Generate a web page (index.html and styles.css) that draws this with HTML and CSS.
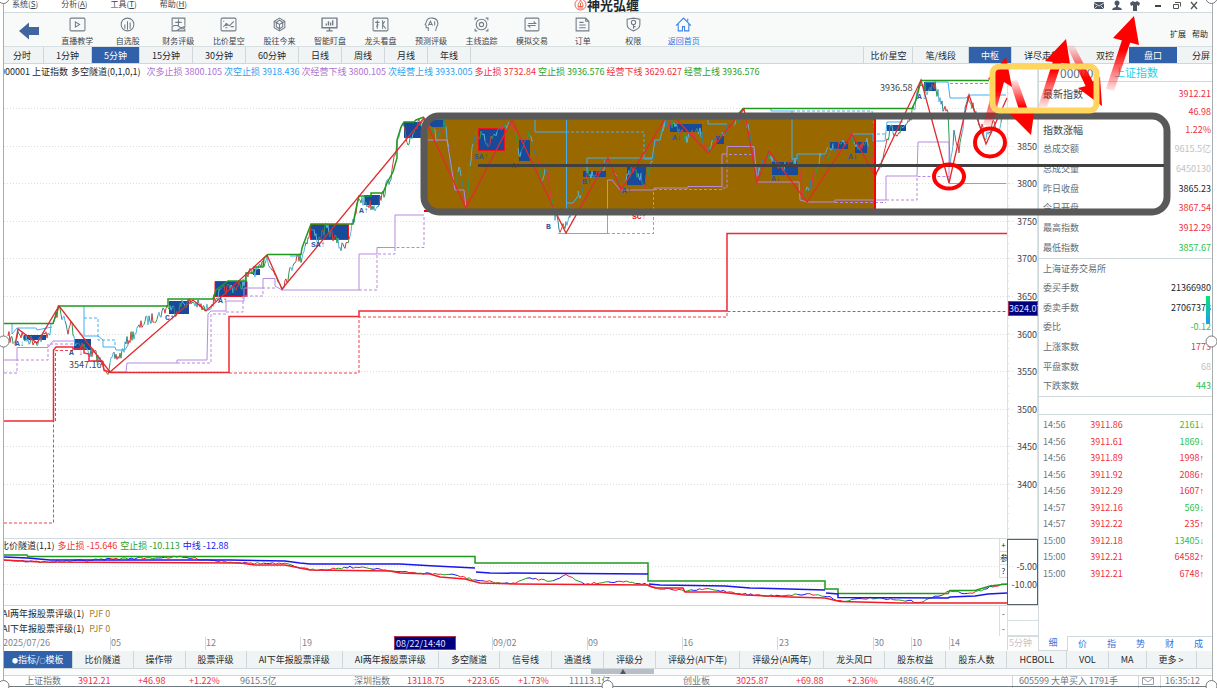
FILE: index.html
```html
<!DOCTYPE html>
<html lang="zh-CN">
<head>
  <meta charset="UTF-8">
  <title>神光弘缠</title>
  <link rel="stylesheet" href="styles.css">
</head>
<body>
  <div class="app">
    <header class="menu-bar">
      <nav class="menus">
        <button>系统(<u>S</u>)</button>
        <button>分析(<u>A</u>)</button>
        <button>工具(<u>T</u>)</button>
        <button>帮助(<u>H</u>)</button>
      </nav>
      <div class="brand">
        <svg width="13" height="13" viewBox="0 0 13 13" fill="none" stroke="#f0604d">
          <circle cx="6.500" cy="6.500" r="5.500"/>
          <path d="M6.500 2C7 4 9.500 5.500 9 8.500H4C3.500 5.500 6 4.500 6.500 2zM6.500 5v4M4 10h5"/>
        </svg>
        <span>神光弘缠</span>
      </div>
      <div class="window-tools">
        <button aria-label="消息"><svg width="12" height="12" viewBox="0 0 12 12"><rect x="1" y="2" width="10" height="7" rx="1" fill="#4d5763"/><path d="M1 3l5 3 5-3M1 9l3-3M11 9L8 6" fill="none" stroke="#cdd2d8"/></svg></button>
        <button aria-label="用户"><svg width="12" height="12" viewBox="0 0 12 12" fill="#4d5763"><circle cx="6" cy="3" r="2.500"/><path d="M5 5h2v2l3 1 1 2H1l1-2 3-1z"/></svg></button>
        <button aria-label="皮肤"><svg width="12" height="12" viewBox="0 0 12 12" fill="#4d5763"><path d="M1 3l3-2q2 2 4 0l3 2-1 3-2-1v6H4V5L2 6z"/></svg></button>
        <button aria-label="最小化" class="gap"><svg width="12" height="12" viewBox="0 0 12 12"><path d="M3 6h6" stroke="#444" stroke-width="2"/></svg></button>
        <button aria-label="还原"><svg width="12" height="12" viewBox="0 0 12 12" fill="none" stroke="#555"><path d="M3.500 4.500h5v4h-5zM5 2.500h5.500v4"/></svg></button>
        <button aria-label="关闭"><svg width="12" height="12" viewBox="0 0 12 12"><path d="M3 2l6 7M9 2L3 9" stroke="#555" stroke-width="1.300"/></svg></button>
      </div>
    </header>

    <div class="toolbar">
      <button class="back" aria-label="返回">
        <svg width="20" height="18" viewBox="0 0 20 18"><path d="M0 9L10 0.500V5h10v8H10v4.500z" fill="#40659f"/></svg>
      </button>
      <nav class="tools">
        <button><svg viewBox="0 0 16 14"><rect x="1" y="1" width="14" height="12" rx="1"/><path d="M6 4.500v5L10 7z"/></svg>直播教学</button>
        <button><svg viewBox="0 0 16 14"><circle cx="8" cy="7" r="6"/><path d="M5.500 11V7M8 12V4M10.500 11V5"/></svg>自选股</button>
        <button><svg viewBox="0 0 16 14"><path d="M2 8V1h12v7M8 2v6M5 5h6M2 9v4h4l3-2h4l1-2-4 1-3-2H4zM7 13h7v-2"/></svg>财务评级</button>
        <button><svg viewBox="0 0 16 14"><rect x="1" y="1" width="14" height="12" rx="1"/><path d="M3 9l3-2 3 1 4-4M3 4h1M5 10h2M10 9h3"/><circle cx="6" cy="7" r="1"/></svg>比价星空</button>
        <button><svg viewBox="0 0 16 14"><path d="M8 1l5 3v6l-5 3-5-3V4zM3 4l5 3 5-3M8 7v6M5 5l3-2 3 2v4L8 11 5 9z"/></svg>股往今来</button>
        <button><svg viewBox="0 0 16 14"><path d="M1 1h14v9H1zM5 13h6M8 10v3M5 8V6M7 8V4M9 8V5M11 8V3" stroke-width="1.300"/></svg>智能盯盘</button>
        <button><svg viewBox="0 0 16 14"><rect x="1" y="1" width="14" height="12" rx="1"/><path d="M5 3v8M3 5h4M6 7l-2 2M10 3v8M12 4l-2 3 3 4"/></svg>龙头看盘</button>
        <button><svg viewBox="0 0 16 14"><path d="M5 13v-3H3V8L2 7l1-2c1-6 11-5 11 1 0 3-2 3-2 7M5 8l2-4 2 4M6 7h2M11 4v4"/></svg>预测评级</button>
        <button><svg viewBox="0 0 16 14"><path d="M2 3V1h2M12 1h2v2M14 11v2h-2M4 13H2v-2"/><circle cx="8" cy="7" r="5"/><circle cx="8" cy="7" r="2"/></svg>主线追踪</button>
        <button><svg viewBox="0 0 16 14"><rect x="1" y="1" width="13" height="12" rx="1"/><path d="M4 6h7L9 4M11 8H4l2 2"/></svg>模拟交易</button>
        <button><svg viewBox="0 0 16 14"><path d="M2 1h9l3 3v9H2zM11 1v3h3M5 5h4M5 7.500h6M5 10h6"/></svg>订单</button>
        <button><svg viewBox="0 0 16 14"><path d="M2 2l6-1 6 1v5c0 3-3 5-6 6-3-1-6-3-6-6z"/><circle cx="8" cy="5" r="2"/><path d="M8 7v4M8 9h2"/></svg>权限</button>
        <button class="home"><svg viewBox="0 0 16 14"><path d="M1 8l7-7 7 7M3 6v7h4V9h2v4h4V6M12 4V1.500"/></svg>返回首页</button>
      </nav>
      <div class="extras"><button>扩展</button><button>帮助</button></div>
    </div>

    <nav class="tabs periods">
      <button class="first">分时</button><button>1分钟</button><button class="active">5分钟</button><button>15分钟</button><button>30分钟</button><button>60分钟</button><button>日线</button><button>周线</button><button>月线</button><button>年线</button>
      <span class="spacer"></span>
      <button class="tight">比价星空</button><button>笔/线段</button><button class="active">中枢</button><button class="flow">详尽走势</button><button class="wide">双控</button><button class="wide active">盘口</button><button class="last">分屏</button>
    </nav>

    <main class="workspace">
      <section class="charts">
        <div class="main-chart">
          <p class="legend">
            <span>000001</span><span>上证指数</span><span class="name">多空隧道(0,1,0,1)</span>
            <span class="purple">次多止损 3800.105</span><span class="blue">次空止损 3918.436</span><span class="purple">次经营下线 3800.105</span><span class="blue">次经营上线 3933.005</span><span class="red">多止损 3732.84</span><span class="green">空止损 3936.576</span><span class="red">经营下线 3629.627</span><span class="green">经营上线 3936.576</span>
          </p>
          <svg class="plot" viewBox="4 64 1034 474">
            <g id="grid"></g>
            <path class="frame" d="M1007.500 64V538M1037.500 64V538"/>
            <path class="gold" d="M427 119H875V209H427z"/>
            <g class="pivots">
              <path d="M24 335h22v5H24zM74 339h17v11H74zM169 301h20v13h-20zM253 269h7v6h-7zM364 195h16v10h-16zM404 122h17v16h-17zM430 120h15v7h-15zM519 140h11v21h-11zM583 171h23v6h-23zM627 167h19v18h-19zM670 124h32v8h-32zM716 136h8v8h-8zM772 162h26v13h-26zM830 142h18v7h-18zM855 142h12v11h-12zM887 125h19v6h-19zM924 82h12v9h-12z"/>
              <path class="major" d="M215 281.500h32v15h-32zM310.500 224.500h38v15h-38zM478.500 128.500h26v22h-26z"/>
            </g>
            <g id="candles"></g>
            <path class="line purple-line" d="M4 360H17V347.500H48L53 341H74M110 372H126L127 363H177V360H207L208 314 211 311H226V301H244V288H263V278.500H275V286L282 290H359V254H377V247.500H395V215H424M428 140H447L455 190H464L466 208M558 233.500H607.500V180H612L620 190H654V188H688V186.500H722V154H727V146.500H754L757 182H799L800 200 807 202H835V200H886V176H917L918 142H949V183.500H1006"/>
            <path class="line purple-line dash" d="M4 373H17V360H48V344H74M177 363H211V314H226M226 312H243V296H263V288H275M359 290H377V254H395V247.500H424V215M607 233.500H653.500V190M654 189.500H722V188H727V154.500H754M835 202.500H886M886 200H917V176.500H949"/>
            <path class="line blue-line" d="M12 323V334L17 328H36L37 330 52 327M84 306V336H98L103 340V347H115L116 350H125L128 345M290 256H301M535 120V132H566M566.500 120V213M566 203H573L578 196M587 173V158H652M644 159H652L655 140H660L665 120M708 120V124H727M771 109V111H792V159H797V154H825L828 147M852 134H873V141H885L887 122H903M925 82H948L950 98H966L969 95H1006"/>
            <path class="line blue-line dash" d="M84 318H98V340H115V347M566 132H644V159M792 111H872L875 132M872 134H885M950 83.500H989"/>
            <path class="line green-line" d="M4 323.500H53L59 306H168V299H213L216 290 228 281H246V273H253L254 267H263L264 258 268 254.500H301L302 248 311 224H353L357 204 359 196H371V193H383L387 183 393 172 397 158V140L401 127 404 122H414L416 120 424 117M736 117L743 108.500H912L916 100 921 80.500H989"/>
            <path class="line zigzag" d="M15 345L18 329 37 343 59 306 110 372 193 300 206 311 267 255 282 289 424 118 466 208 512 120 556 213 566 233 608 158 621 190 665 119H676L708 153 744 109 757 182 769 151 807 202 852 134 875 176 921 80 949 183 969 95 986 144 1007 98"/>
            <path class="line stop" d="M4 421H53.500V350L56 347H73V349H84V353L89 354V361H102L104 370 110 372.500H229V316.500H359V311H727V233.500H1007"/>
            <path class="line stop-dash" d="M4 523H53.500V421M55.500 421V350.500H73M229 373H359V317H727V311.500H1007"/>
            <path d="M875 119V209M424 211h5" stroke="red" stroke-width="2"/>
            <g class="mark">
              <text x="15" y="346">A↓</text><text x="69" y="355">A ↓</text><text x="165" y="320">C↑</text><text x="218" y="303">A↑</text><text x="311" y="247">SA↑</text><text x="359" y="213">A↑</text><text x="474" y="159">SA↑</text><text x="511" y="168">A↑</text><text x="582" y="184">B↑</text><text x="622" y="193">A↑</text><text x="672" y="140">A↓</text><text x="771" y="181">A↓</text><text x="848" y="159">A↓</text><text x="917" y="99">A↓</text><text x="546" y="229">B</text>
              <text x="632" y="219" class="hot">SC↑</text>
            </g>
            <text class="price-tag" x="880" y="91">3936.58</text>
            <text class="price-tag" x="69" y="368">3547.16</text>
            <g id="price-axis"></g>
            <rect x="1008.500" y="301.500" width="29" height="14" fill="#00007f" stroke="#b03050"/>
            <text x="1009" y="312" class="current">3624.07</text>
          </svg>
        </div>

        <div class="sub-chart">
          <p class="legend">
            <span>比价隧道(1,1)</span><span class="red">多止损 -15.646</span><span class="green">空止损 -10.113</span><span class="navy">中线 -12.88</span>
          </p>
          <svg class="plot" viewBox="4 539 1034 66">
            <path class="dots" d="M4 566.500H1014M4 584.500H1014"/>
            <g id="spread"></g>
            <path class="line green-line" d="M4 555H27L28 556.500H475V563H648V581H825V589H838V593.500H948L950 590.500H975L990 586 1007 584"/>
            <path class="line mid" d="M4 557L28 558 50 560H230L285 561 300 563 310 564H400L435 566 475 568M476 572L490 573 648 574M649 584L660 585 725 586 750 588 825 590M826 593L838 594V597.500L948 598 950 597 975 596 988 594 1007 593"/>
            <path class="line low" d="M4 560L40 562 240 563 255 565H285L310 570 390 571 400 573 430 574 440 577 465 579 480 583 515 584 648 585 655 588H683L685 592H720L745 595 790 597 825 598 840 601.500 900 603H1007"/>
            <rect x="1007.500" y="539.500" width="30" height="65" fill="none" stroke="#59626b"/>
            <g class="axis-text"><text x="1037" y="570">-5.00</text><text x="1037" y="588">-10.00</text></g>
          </svg>
          <div class="sub-tools"><button>+</button><button>参</button><button>?</button></div>
        </div>

        <div class="rating"><p>AI两年报股票评级(1)<span>PJF 0</span></p><button>-</button><i></i></div>
        <div class="rating"><p>AI下年报股票评级(1)<span>PJF 0</span></p><button>-</button><i></i></div>

        <svg class="dates" viewBox="4 636 1034 15">
          <path d="M110.500 637V650M205.500 637V650M300.500 637V650M492.500 637V650M587.500 637V650M682.500 637V650M777.500 637V650M873.500 637V650M911.500 637V650M949.500 637V650M1007.500 636V650M1007 636.500H1038" stroke="#d3dadd"/>
          <text x="3" y="646">2025/07/26</text><text x="111" y="646">05</text><text x="206" y="646">12</text><text x="302" y="646">19</text>
          <rect x="394.500" y="636.500" width="61" height="13" fill="#00007f" stroke="#b03050"/>
          <text x="396" y="647" class="current">08/22/14:40</text>
          <text x="493" y="646">09/02</text><text x="588" y="646">09</text><text x="683" y="646">16</text><text x="779" y="646">23</text><text x="874" y="646">30</text><text x="912" y="646">10</text><text x="950" y="646">14</text>
          <text x="1009" y="646" class="pale">5分钟</text>
        </svg>
      </section>

      <aside class="quote">
        <h2><span>000001</span><span class="title">上证指数</span></h2>
        <dl class="headline">
          <div><dt>最新指数</dt><dd class="red">3912.21</dd></div>
          <div><dt></dt><dd class="red">46.98</dd></div>
          <div><dt>指数涨幅</dt><dd class="red">1.22%</dd></div>
        </dl>
        <dl class="summary">
          <div><dt>总成交额</dt><dd class="pale">9615.5亿</dd></div>
          <div><dt>总成交量</dt><dd class="pale">6450130</dd></div>
          <div><dt>昨日收盘</dt><dd>3865.23</dd></div>
          <div><dt>今日开盘</dt><dd class="red">3867.54</dd></div>
          <div><dt>最高指数</dt><dd class="red">3912.29</dd></div>
          <div><dt>最低指数</dt><dd class="up-green">3857.67</dd></div>
        </dl>
        <dl class="exchange">
          <div><dt>上海证券交易所</dt><dd></dd></div>
          <div><dt>委买手数</dt><dd>21366980</dd></div>
          <div><dt>委卖手数</dt><dd>27067373</dd></div>
          <div><dt>委比</dt><dd class="up-green">-0.12</dd></div>
          <div><dt>上涨家数</dt><dd class="red">1773</dd></div>
          <div><dt>平盘家数</dt><dd class="pale">68</dd></div>
          <div><dt>下跌家数</dt><dd class="up-green">443</dd></div>
        </dl>
        <div class="blank"></div>
        <table class="ticks">
          <tr><td>14:56</td><td>3911.86</td><td class="up-green">2161<b>↓</b></td></tr>
          <tr><td>14:56</td><td>3911.61</td><td class="up-green">1869<b>↓</b></td></tr>
          <tr><td>14:56</td><td>3911.89</td><td class="red">1998<b>↑</b></td></tr>
          <tr><td>14:56</td><td>3911.92</td><td class="red">2086<b>↑</b></td></tr>
          <tr><td>14:56</td><td>3912.29</td><td class="red">1607<b>↑</b></td></tr>
          <tr><td>14:57</td><td>3912.16</td><td class="up-green">569<b>↓</b></td></tr>
          <tr><td>14:57</td><td>3912.22</td><td class="red">235<b>↑</b></td></tr>
          <tr><td>15:00</td><td>3912.18</td><td class="up-green">13405<b>↓</b></td></tr>
          <tr><td>15:00</td><td>3912.21</td><td class="red">64582<b>↑</b></td></tr>
          <tr><td>15:00</td><td>3912.21</td><td class="red">6748<b>↑</b></td></tr>
        </table>
        <nav class="quote-tabs">
          <button class="on">细</button><button>价</button><button>指</button><button>势</button><button>财</button><button>成</button>
        </nav>
      </aside>
    </main>

    <nav class="tabs indicators">
      <button class="active"><small>●</small>指标/<small>○</small>模板</button><button>比价隧道</button><button>操作带</button><button>股票评级</button><button>AI下年报股票评级</button><button>AI两年报股票评级</button><button>多空隧道</button><button>信号线</button><button>通道线</button><button>评级分</button><button>评级分(AI下年)</button><button>评级分(AI两年)</button><button>龙头风口</button><button>股东权益</button><button>股东人数</button><button>HCBOLL</button><button>VOL</button><button>MA</button><button>更多 &gt;</button>
    </nav>
    <div class="scroll-strip"><button aria-label="展开"><svg width="8" height="5" viewBox="0 0 8 5"><path d="M4 0l3 5H1z" fill="#4d5763"/></svg></button></div>

    <footer class="status">
      <div class="index"><span>上证指数</span><span class="red">3912.21</span><span class="red">+46.98</span><span class="red">+1.22%</span><span>9615.5亿</span></div>
      <div class="index"><span>深圳指数</span><span class="red">13118.75</span><span class="red">+223.65</span><span class="red">+1.73%</span><span>11113.1亿</span></div>
      <div class="index"><span>创业板</span><span class="red">3025.87</span><span class="red">+69.88</span><span class="red">+2.36%</span><span>4886.4亿</span></div>
      <span class="news">605599 大单买入 1791手</span>
      <span class="mail"><svg width="12" height="8" viewBox="0 0 12 8" fill="none" stroke="#98a1a8"><path d="M.5.5h11v7H.5zM.5.5L6 5 11.500.5"/></svg></span>
      <span class="clock">16:35:12</span>
    </footer>
  </div>

  <svg class="drawings" viewBox="0 0 1217 688">
    <defs>
      <linearGradient id="up" x1="0" y1="1" x2="0" y2="0"><stop offset="0" stop-color="red" stop-opacity="0.100"/><stop offset="0.800" stop-color="red"/></linearGradient>
      <linearGradient id="down" x1="0" y1="0" x2="0" y2="1"><stop offset="0" stop-color="red" stop-opacity="0.050"/><stop offset="0.800" stop-color="red"/></linearGradient>
      <linearGradient id="gauge" x1="0" y1="0" x2="0" y2="1"><stop offset="0" stop-color="#00e676"/><stop offset="1" stop-color="#1e9cf0"/></linearGradient>
    </defs>
    <rect x="1206" y="296" width="4" height="28" fill="url(#gauge)"/>
    <rect x="424" y="116" width="743" height="96" rx="15" fill="none" stroke="#595959" stroke-width="7"/>
    <path d="M478 165.500H1164" stroke="#404040" stroke-width="3"/>
    <path d="M983 125L995 82H1004L992 126z" fill="url(#up)"/>
    <path d="M1010 82L1017 79 1029 113H1020z" fill="url(#down)"/>
    <path d="M1038 107L1053 61H1062L1047 107z" fill="url(#up)"/>
    <path d="M1067 46L1074 45 1094 84 1086 87z" fill="url(#down)"/>
    <path d="M1106 89L1122 40H1131L1114 91z" fill="url(#up)"/>
    <path fill="red" d="M1006 57L1012 87 1004 82 998 84 988 79zM1010 114L1034 113 1031 135zM1066 39L1070 64 1045 61zM1102 106L1078 88 1086 86 1100 77zM1134 16L1139 45 1113 38z"/>
    <rect x="992.500" y="66.500" width="104" height="44" rx="7" fill="none" stroke="#ffd45f" stroke-width="6"/>
    <g fill="none" stroke="red" stroke-width="4"><ellipse cx="990" cy="142.500" rx="15" ry="14"/><ellipse cx="949" cy="176.500" rx="15" ry="12"/></g>
    <path d="M3.500 0V688M1212.500 0V688" stroke="#a8adb0"/>
    <path d="M3 686.500H1213" stroke="#707a80"/>
    <g class="handles"><circle cx="3.500" cy="-2" r="5.500"/><circle cx="1211.500" cy="-2" r="5.500"/><circle cx="3.500" cy="341.500" r="5.500"/><circle cx="1211.500" cy="341.500" r="5.500"/><circle cx="3.500" cy="686" r="5.500"/><circle cx="607.500" cy="686" r="5.500"/><circle cx="1211.500" cy="686" r="5.500"/></g>
  </svg>
  <script src="chart.js"></script>
</body>
</html>
```
FILE: styles.css
```css
* {
  box-sizing: border-box;
}

body {
  margin: 0;
  background: #fff;
  color: #22272c;
  font-family: "Noto Sans CJK SC", sans-serif;
  font-size: 9px;
  line-height: 12px;
  overflow: hidden;
}

button {
  border: 0;
  padding: 0;
  background: none;
  color: inherit;
  font: inherit;
  white-space: nowrap;
  cursor: pointer;
}

p, h2, dl, dd {
  margin: 0;
}

svg {
  display: block;
}

.app {
  display: flex;
  flex-direction: column;
  height: 100vh;
  padding: 0 4px;
}

.red { color: #f0303c; }
.green { color: #2ba12b; }
.up-green { color: #2fc04a; }
.purple { color: #ad72d2; }
.blue { color: #2da0f2; }
.navy { color: #2020f0; }
.pale { color: #c2c2c2; }

/* menu */
.menu-bar {
  display: grid;
  grid-template-columns: 1fr auto 1fr;
  height: 13px;
  border-bottom: 1px solid #d3dadd;
}

.menus {
  display: flex;
  gap: 23px;
  padding-left: 8px;
  font-size: 8px;
  line-height: 8px;
  color: #3c444c;
}

.menus button {
  height: 8px;
}

.brand {
  display: flex;
  height: 11px;
  padding-right: 4px;
  font-size: 13px;
  font-weight: bold;
  line-height: 9px;
}

.brand svg {
  margin-top: -2px;
}

.window-tools {
  display: flex;
  justify-content: flex-end;
  gap: 6px;
  padding-right: 13px;
}

.window-tools .gap {
  margin-left: 5px;
}

/* toolbar */
.toolbar {
  display: flex;
  height: 33px;
  background: #f8fafa;
}

.back {
  width: 48px;
  padding: 2px 0 0 15px;
}

.tools {
  display: grid;
  grid-template-columns: repeat(13, 1fr);
  flex: 0 1 657px;
  color: #3c444c;
  font-size: 8px;
  line-height: 10px;
}

.tools button {
  display: flex;
  flex-direction: column;
  align-items: center;
  gap: 4px;
  padding-top: 4px;
}

.tools svg {
  width: 17px;
  height: 15px;
  fill: none;
  stroke: #737c87;
}

.tools .home {
  color: #2f74e0;
}

.tools .home svg {
  stroke: #3f80e6;
}

.extras {
  display: flex;
  gap: 6px;
  align-items: flex-end;
  margin-left: auto;
  padding: 0 5px 6px 0;
  font-size: 8px;
}

/* tab strips */
.tabs {
  display: flex;
  height: 18px;
  background: #f1f4f4;
  border-top: 1px solid #d8dfe1;
  border-bottom: 1px solid #cfd7da;
}

.tabs button {
  padding: 0 12px;
  border-right: 1px solid #cfd7da;
  line-height: 15px;
}

.tabs .active {
  background: #3161a9;
  color: #fff;
}

.tabs .first {
  padding-left: 9px;
}

.tabs .spacer {
  flex: 1;
}

.tabs .tight {
  padding: 0 6px;
  border-left: 1px solid #cfd7da;
}

.tabs .flow {
  width: 69px;
  border: 0;
  text-align: left;
}

.tabs .wide {
  padding: 0 15px;
  border: 0;
}

.tabs .last {
  padding: 0 3px 0 15px;
  border: 0;
}

/* charts */
.workspace {
  display: flex;
  flex: 1;
  min-height: 0;
}

.charts {
  display: flex;
  flex: 1;
  flex-direction: column;
  min-width: 0;
  overflow: hidden;
}

.main-chart {
  position: relative;
  flex: 1;
  min-height: 0;
}

.sub-chart {
  position: relative;
  height: 67px;
  border-top: 1px solid #d3dadd;
}

.plot {
  width: 100%;
  height: 100%;
  font-size: 9px;
}

.legend {
  position: absolute;
  top: 2px;
  left: -4px;
  display: flex;
  gap: 2px;
  white-space: nowrap;
}

.legend .name {
  margin: 0 4px 0 1px;
}

.sub-chart .legend {
  top: 1px;
  gap: 3px;
}

.line {
  fill: none;
}

.frame {
  fill: none;
  stroke: #dce2e4;
}

.dots {
  fill: none;
  stroke: #dedede;
  stroke-dasharray: 1 2;
}

.gold { fill: #996900; }
.pivots { fill: #174a99; }
.major { stroke: #f01020; }
.purple-line { stroke: #b78add; }
.blue-line { stroke: #43aef2; }
.green-line { stroke: #21991e; stroke-width: 1.500; }
.zigzag { stroke: #e22a2e; stroke-width: 1.300; }
.stop { stroke: #ee2934; stroke-width: 1.500; }
.stop-dash { stroke: #f2404a; stroke-dasharray: 3 2; }
.dash { stroke-dasharray: 3 2; }
.mid { stroke: #1717ee; stroke-width: 1.500; }
.low { stroke: #f01c28; stroke-width: 1.500; }

.mark {
  fill: #2c559c;
  font: bold 8px "Liberation Mono", monospace;
}

.mark .hot {
  fill: #f01020;
}

.price-tag, .axis-text {
  fill: #3c4650;
}

.axis-text {
  text-anchor: end;
}

.plot .current, .dates .current {
  fill: #dfe2ff;
}

.sub-tools {
  position: absolute;
  top: 0;
  right: 31px;
  display: flex;
  flex-direction: column;
  width: 8px;
  background: #fff;
}

.sub-tools button {
  height: 13px;
  border: 1px solid #d8dfe1;
  border-width: 0 0 1px 1px;
  font-size: 8px;
  line-height: 12px;
}

.rating {
  display: grid;
  grid-template-columns: 1fr 8px 31px;
  height: 15px;
}

.rating p {
  margin-left: -2px;
  line-height: 15px;
}

.rating p span {
  margin-left: 5px;
  color: #a8822c;
}

.rating button {
  border-left: 1px solid #d8dfe1;
  font-size: 8px;
}

.rating i {
  border: 1px solid #d8dfe1;
  border-width: 0 0 1px 1px;
}

.sub-chart + .rating {
  height: 16px;
  border-top: 1px solid #d3dadd;
}

.dates {
  height: 15px;
  font-size: 9px;
  fill: #7c868f;
}

.dates .pale {
  fill: #cdbfc4;
}

/* quote panel */
.quote {
  display: flex;
  flex-direction: column;
  width: 175px;
  border-left: 1px solid #d3dadd;
}

.quote h2 {
  display: flex;
  gap: 14px;
  height: 18px;
  padding-left: 21px;
  border-bottom: 1px solid #d3dadd;
  color: #66707a;
  font-size: 12px;
  font-weight: normal;
  line-height: 17px;
}

.quote .title {
  color: #22d0ee;
  font-size: 11px;
}

.quote dl {
  display: grid;
  grid-auto-rows: 1fr;
  color: #626c76;
  line-height: 18px;
}

.quote dl div {
  display: flex;
  justify-content: space-between;
  align-items: center;
  padding: 0 2px 0 4px;
}

.quote dd:not([class]) {
  color: #22272c;
}

.quote .headline {
  padding-top: 3px;
}

.headline dt {
  color: #3c444c;
  font-size: 10px;
}

.quote .summary {
  height: 119px;
}

.quote .exchange {
  height: 139px;
  border-top: 1px solid #d3dadd;
  border-bottom: 1px solid #d3dadd;
}

.blank {
  height: 18px;
  border-bottom: 1px solid #d3dadd;
}

.ticks {
  height: 165px;
  margin-top: 2px;
  border-collapse: collapse;
  color: #6d7780;
  line-height: 12px;
}

.ticks td {
  padding: 0 0 0 4px;
}

.ticks td:nth-child(2) {
  padding-left: 10px;
  color: #f0303c;
}

.ticks td:last-child {
  padding-right: 9px;
  text-align: right;
}

.ticks b {
  font-family: "Liberation Sans", sans-serif;
}

.quote-tabs {
  display: grid;
  grid-template-columns: repeat(6, 1fr);
  height: 15px;
  margin-top: auto;
  color: #2f74e0;
}

.quote-tabs button {
  border-top: 1px solid #d3dadd;
}

.quote-tabs .on {
  border-top: 0;
  border-right: 1px solid #d3dadd;
  border-bottom: 1px solid #d3dadd;
}

/* bottom */
.indicators {
  border-top: 0;
}

.indicators button:first-child {
  padding: 0 8px;
}

.indicators small {
  font-size: 6px;
}

.scroll-strip {
  height: 6px;
  padding-left: 587px;
  background: #fafbfb;
}

.scroll-strip button {
  display: flex;
  justify-content: center;
  width: 63px;
  height: 5px;
  background: #b7bec6;
}

.status {
  display: flex;
  height: 13px;
  padding-left: 21px;
  border-top: 1px solid #cfd7da;
  color: #6d7780;
  line-height: 10px;
  white-space: nowrap;
}

.index {
  display: grid;
  grid-template-columns: 53px 60px 51px 51px 1fr;
  flex: 0 1 329px;
}

.news {
  padding-left: 6px;
  border-left: 1px solid #cfd7da;
}

.mail {
  margin-left: auto;
  padding: 1px 6px 0 3px;
  border: 1px solid #cfd7da;
  border-width: 0 1px;
}

.clock {
  padding: 0 13px 0 4px;
}

.drawings {
  position: absolute;
  top: 0;
  left: 0;
  width: 100%;
  height: 100%;
  pointer-events: none;
}

.handles {
  fill: #fff;
  stroke: #777;
}
```
FILE: chart.js
```js
const NS = "http://www.w3.org/2000/svg";

function add(parent, tag, attrs, text) {
  const el = document.createElementNS(NS, tag);
  for (const key in attrs) el.setAttribute(key, attrs[key]);
  if (text) el.textContent = text;
  parent.appendChild(el);
}

let seed = 7;
function rnd() {
  seed = (seed * 16807) % 2147483647;
  return seed / 2147483647 - 0.5;
}

// price levels, 50 points apart
const grid = document.getElementById("grid");
const axis = document.getElementById("price-axis");
for (let i = 0; i < 11; i++) {
  const y = Math.round(108 + i * 37.6) + 0.5;
  add(grid, "path", { class: "dots", d: `M4 ${y}H1014` });
  if (i > 0) add(axis, "text", { class: "axis-text", x: 1037, y: y + 3 }, String(3900 - i * 50));
}
let minor = "";
for (let y = 71; y < 538; y += 7.5) minor += `M1007 ${y}h2`;
add(grid, "path", { class: "frame", d: minor });

// walk along the points with some jitter, one short stroke per step
function walk(id, points, step, jitter, colors, width) {
  const g = document.getElementById(id);
  const paths = colors.map(() => "");
  let prev = points[0];
  let n = 0;
  for (let i = 1; i < points.length; i++) {
    const [x0, y0] = points[i - 1];
    const [x1, y1] = points[i];
    const steps = Math.max(1, Math.round((x1 - x0) / step));
    for (let s = 1; s <= steps; s++) {
      const t = s / steps;
      const next = [x0 + (x1 - x0) * t, y0 + (y1 - y0) * t + rnd() * jitter];
      // keep one colour for a few strokes so that runs stay visible
      const c = Math.floor(n++ / 3) % colors.length;
      paths[c] += `M${prev[0].toFixed(1)} ${prev[1].toFixed(1)}L${next[0].toFixed(1)} ${next[1].toFixed(1)}`;
      prev = next;
    }
  }
  paths.forEach((d, i) => add(g, "path", { d, fill: "none", stroke: colors[i], "stroke-width": width }));
}

walk("candles", [
  [8, 336], [15, 343], [18, 331], [25, 339], [37, 341], [50, 331], [59, 308], [65, 322], [68, 335], [71, 320],
  [75, 342], [82, 344], [88, 352], [95, 354], [102, 364], [108, 370], [113, 358], [120, 356], [128, 340],
  [134, 334], [144, 322], [158, 316], [168, 306], [176, 311], [183, 303], [193, 302], [206, 310], [218, 295],
  [228, 288], [240, 287], [250, 273], [260, 270], [267, 256], [273, 272], [282, 286], [290, 272], [295, 258],
  [301, 258], [311, 228], [318, 240], [326, 228], [334, 237], [341, 248], [348, 240], [355, 218], [359, 198],
  [366, 203], [375, 207], [383, 195], [392, 172], [398, 140], [404, 125], [408, 145], [414, 128], [424, 120],
  [437, 138], [445, 122], [450, 160], [455, 188], [460, 165], [466, 206], [473, 140], [480, 135], [488, 143],
  [500, 128], [512, 122], [520, 155], [530, 134], [542, 180], [546, 165], [555, 215], [560, 228], [566, 225],
  [573, 203], [582, 190], [588, 172], [598, 175], [608, 160], [616, 175], [622, 188], [632, 170], [645, 182],
  [654, 155], [665, 122], [676, 125], [685, 138], [700, 132], [708, 150], [718, 140], [727, 128], [744, 112],
  [750, 135], [757, 178], [763, 162], [769, 154], [778, 170], [790, 164], [799, 160], [803, 198], [810, 188],
  [820, 158], [825, 162], [832, 148], [843, 144], [852, 137], [860, 150], [867, 142], [875, 173], [884, 158],
  [890, 130], [900, 132], [912, 115], [921, 83], [928, 92], [935, 86], [942, 106], [948, 112], [950, 160],
  [954, 135], [959, 152], [965, 112], [969, 97], [977, 118], [986, 138], [993, 125], [999, 128], [1004, 108]
], 1, 11, ["#d8393c", "#2c9a4f", "#5bb1d8", "#31858f"], 1);

walk("spread", [
  [4, 560], [40, 562], [75, 561], [110, 559], [180, 557], [210, 560], [245, 563], [285, 564], [310, 570],
  [330, 569], [350, 567], [380, 569], [400, 572], [435, 574], [455, 575], [475, 580], [510, 584], [530, 578],
  [550, 581], [566, 575], [585, 584], [620, 581], [645, 584], [655, 588], [685, 591], [708, 589], [745, 594],
  [765, 596], [810, 594], [830, 597], [840, 601], [870, 598], [920, 602], [935, 597], [950, 591], [970, 594],
  [990, 587], [1007, 584]
], 3, 2, ["#f01c28", "#21991e", "#1717ee"], 1);
```
